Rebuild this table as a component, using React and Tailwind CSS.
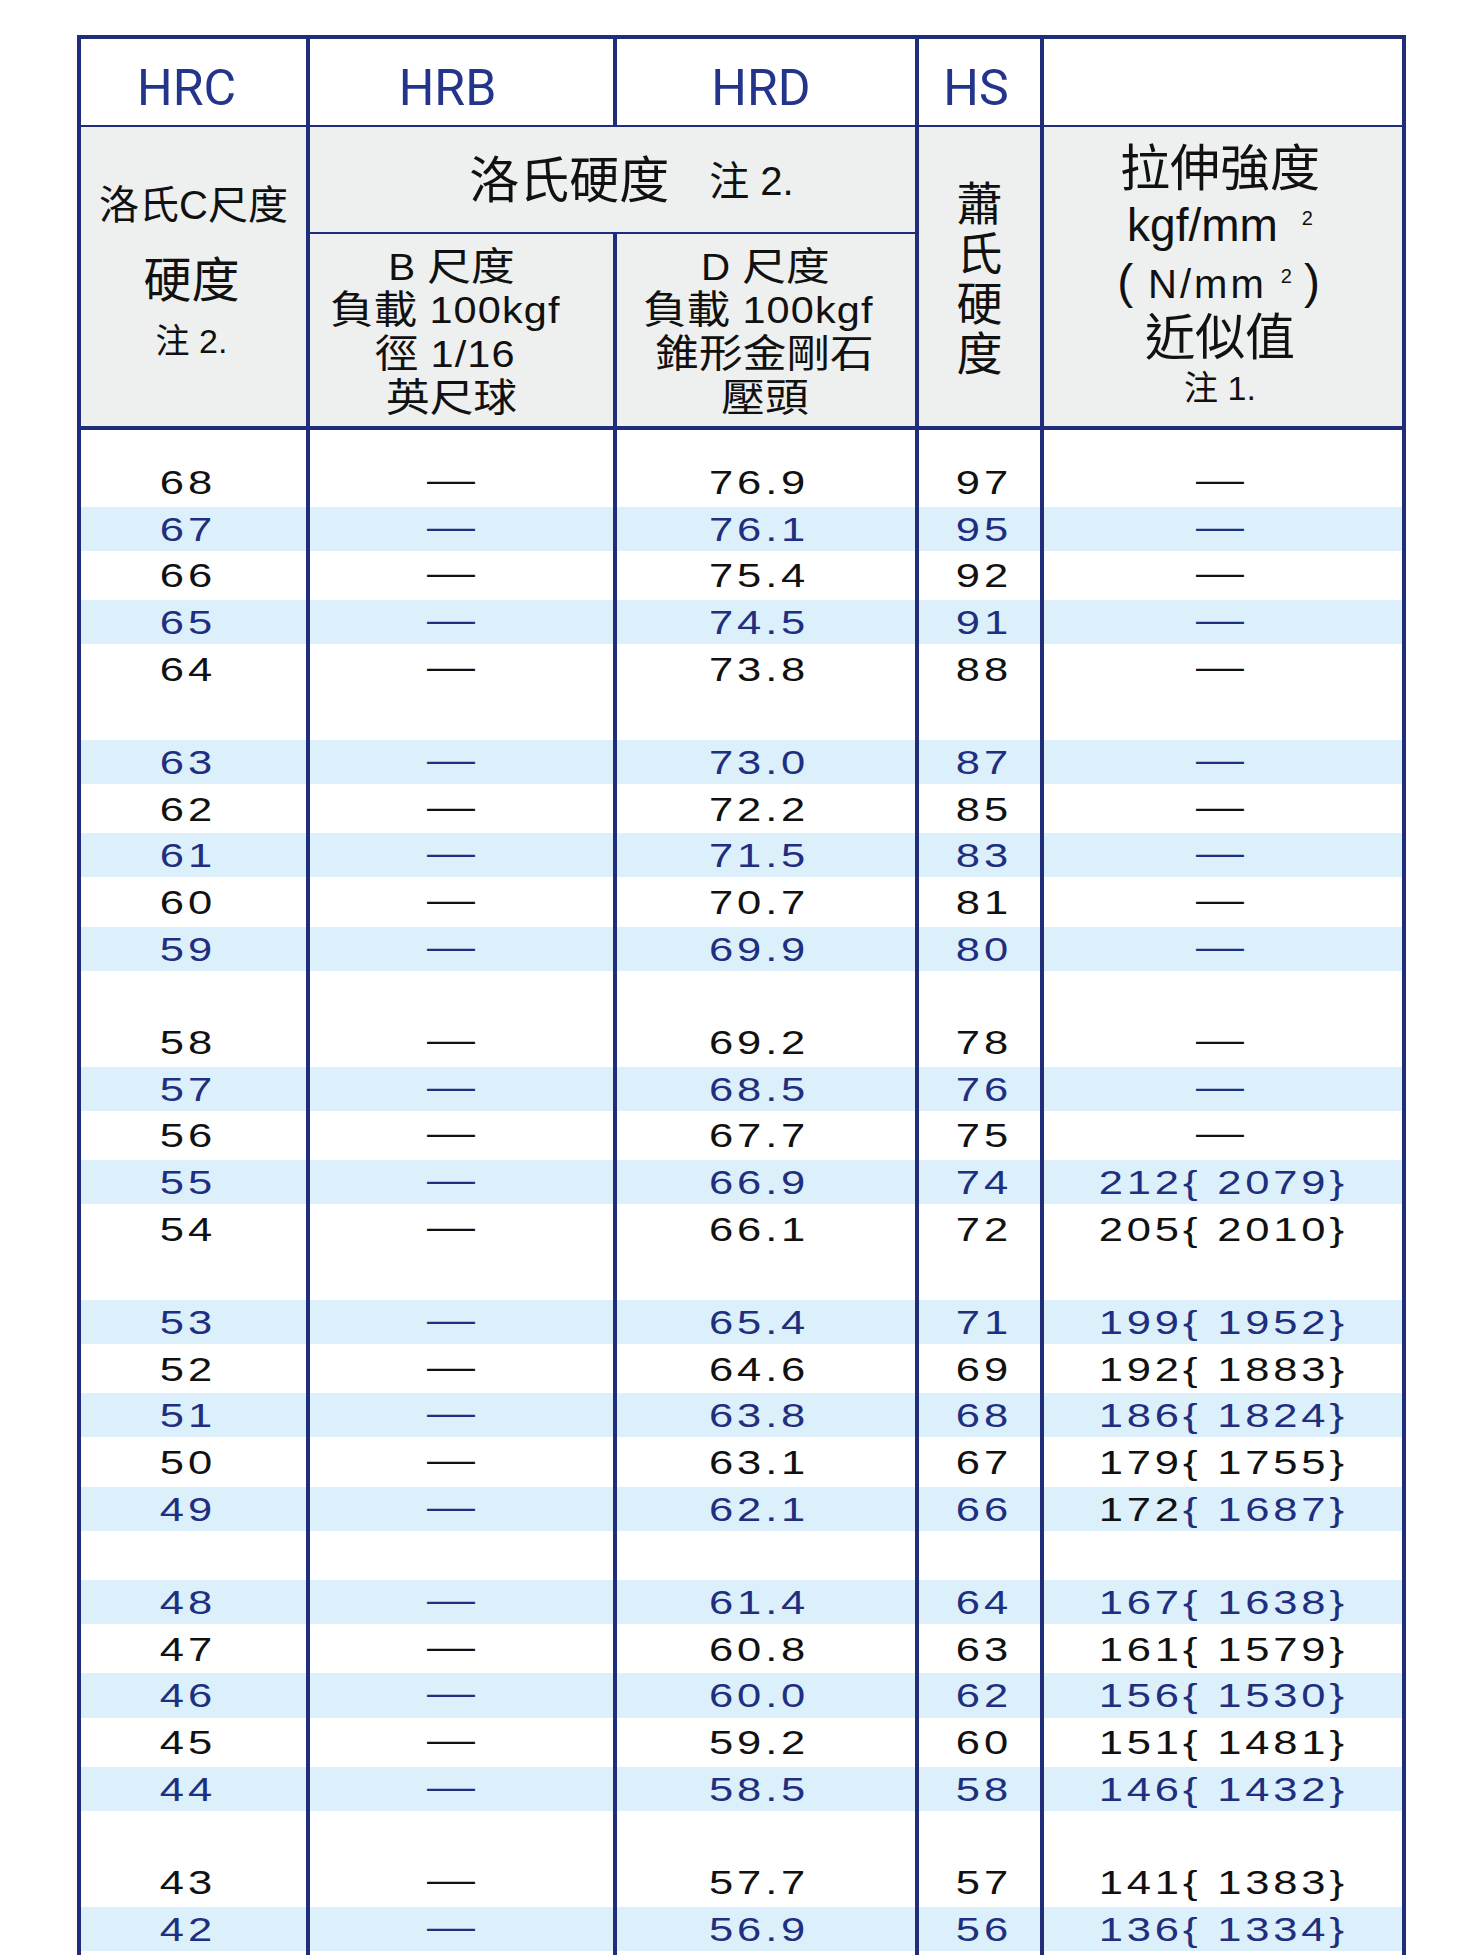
import React from "react";

const GRID =
  "grid grid-cols-[225px_303px_298px_121px_358px] gap-x-[4px] bg-[#1f2d7b]";

const BLUE = new Set([67, 65, 63, 61, 59, 57, 55, 53, 51, 49, 48, 46, 44, 42]);

const DATA = [
  [68, "76.9", 97, null],
  [67, "76.1", 95, null],
  [66, "75.4", 92, null],
  [65, "74.5", 91, null],
  [64, "73.8", 88, null],
  "blank",
  [63, "73.0", 87, null],
  [62, "72.2", 85, null],
  [61, "71.5", 83, null],
  [60, "70.7", 81, null],
  [59, "69.9", 80, null],
  "blank",
  [58, "69.2", 78, null],
  [57, "68.5", 76, null],
  [56, "67.7", 75, null],
  [55, "66.9", 74, "212{ 2079}"],
  [54, "66.1", 72, "205{ 2010}"],
  "blank",
  [53, "65.4", 71, "199{ 1952}"],
  [52, "64.6", 69, "192{ 1883}"],
  [51, "63.8", 68, "186{ 1824}"],
  [50, "63.1", 67, "179{ 1755}"],
  [49, "62.1", 66, "172", "{ 1687}"],
  "blank",
  [48, "61.4", 64, "167{ 1638}"],
  [47, "60.8", 63, "161{ 1579}"],
  [46, "60.0", 62, "156{ 1530}"],
  [45, "59.2", 60, "151{ 1481}"],
  [44, "58.5", 58, "146{ 1432}"],
  "blank",
  [43, "57.7", 57, "141{ 1383}"],
  [42, "56.9", 56, "136{ 1334}"],
  "blank",
];

function Dash() {
  return (
    <span className="inline-block text-[34px] leading-none scale-x-[1.41] -translate-y-[3px]">
      —
    </span>
  );
}

function Cell({ blue, pad, children }) {
  return (
    <div className="bg-white py-[1.34px]">
      <div
        className={
          "h-full flex items-center justify-center " +
          (blue ? "bg-[#dcf0fb] text-[#1f2f80] " : "text-[#111111] ") +
          pad
        }
      >
        {children}
      </div>
    </div>
  );
}

function Num({ children }) {
  return (
    <span className="inline-block whitespace-nowrap text-[34px] leading-none tracking-[3px] scale-x-[1.28]">
      {children}
    </span>
  );
}

function Blank({ h }) {
  return (
    <div className={GRID + " border-x-[4px] border-[#1f2d7b] " + h}>
      <div className="bg-white" />
      <div className="bg-white" />
      <div className="bg-white" />
      <div className="bg-white" />
      <div className="bg-white" />
    </div>
  );
}

function Row({ row }) {
  if (row === "blank") {
    return <Blank h="h-[46.68px]" />;
  }
  const [hrc, hrd, hs, ts, tsRest] = row;
  const blue = BLUE.has(hrc);
  return (
    <div className={GRID + " h-[46.68px] border-x-[4px] border-[#1f2d7b]"}>
      <Cell blue={blue} pad="pr-[11px]">
        <Num>{hrc}</Num>
      </Cell>
      <Cell blue={blue} pad="pr-[21px]">
        <Dash />
      </Cell>
      <Cell blue={blue} pad="pr-[13px]">
        <Num>{hrd}</Num>
      </Cell>
      <Cell blue={blue} pad="pl-[9px]">
        <Num>{hs}</Num>
      </Cell>
      <Cell blue={blue} pad={ts ? "pr-0" : "pr-[6px]"}>
        {ts ? (
          tsRest ? (
            <Num>
              <span className="text-[#111111]">{ts}</span>
              {tsRest}
            </Num>
          ) : (
            <Num>{ts}</Num>
          )
        ) : (
          <Dash />
        )}
      </Cell>
    </div>
  );
}

const LINE =
  "h-[43.6px] leading-[43.6px] text-[39px] scale-x-[1.12] whitespace-nowrap";

export default function App() {
  return (
    <div className="w-[1482px] h-[1955px] overflow-hidden bg-white font-['Liberation_Sans','Noto_Sans_CJK_TC',sans-serif] text-[#111111]">
      <div className="ml-[77px] mt-[35px] w-[1329px]">
        {/* header */}
        <div className="grid grid-cols-[225px_303px_298px_121px_358px] grid-rows-[86px_105px_192px] gap-x-[4px] gap-y-[2px] border-[4px] border-[#1f2d7b] bg-[#1f2d7b]">
          {/* row 1 labels */}
          <div className="bg-white flex items-center justify-center pt-[12px] pr-[14px] font-['Roboto'] text-[50px] leading-none text-[#23358b]">
            HRC
          </div>
          <div className="bg-white flex items-center justify-center pt-[12px] pr-[28px] font-['Roboto'] text-[50px] leading-none text-[#23358b]">
            HRB
          </div>
          <div className="bg-white flex items-center justify-center pt-[12px] pr-[10px] font-['Roboto'] text-[50px] leading-none text-[#23358b]">
            HRD
          </div>
          <div className="bg-white flex items-center justify-center pt-[12px] pr-[7px] font-['Roboto'] text-[50px] leading-none text-[#23358b]">
            HS
          </div>
          <div className="bg-white" />

          {/* col1 rowspan */}
          <div className="row-span-2 bg-[#eef0ef] flex flex-col items-center">
            <div className="mt-[54px] text-[40px] leading-[48px] whitespace-nowrap">洛氏C尺度</div>
            <div className="mt-[24px] pr-[4px] text-[48px] leading-[56px]">硬度</div>
            <div className="mt-[12px] pr-[4px] text-[34px] leading-[40px] whitespace-nowrap">注 2.</div>
          </div>

          {/* 洛氏硬度 colspan */}
          <div className="col-span-2 bg-[#eef0ef] flex items-center justify-center pl-[38px] pt-[2px] whitespace-nowrap">
            <span className="text-[50px] leading-none">洛氏硬度</span>
            <span className="ml-[40px] text-[40px] leading-none">注 2.</span>
          </div>

          {/* HS vertical */}
          <div className="row-span-2 bg-[#eef0ef] flex flex-col items-center justify-center pt-[4px] text-[46px] leading-[50px]">
            <div>蕭</div>
            <div>氏</div>
            <div>硬</div>
            <div>度</div>
          </div>

          {/* tensile strength */}
          <div className="row-span-2 bg-[#eef0ef] flex flex-col items-center pt-[16px] pr-[6px]">
            <div className="text-[50px] leading-[52px]">拉伸強度</div>
            <div className="text-[46px] leading-[61.6px] whitespace-nowrap">
              kgf/mm
              <span className="ml-[24px] text-[20px] leading-none align-super">2</span>
            </div>
            <div className="text-[40px] leading-[55.6px] whitespace-nowrap tracking-[3px]">
              <span className="text-[48px] leading-none mr-[12px]">(</span>
              N/mm
              <span className="ml-[14px] mr-[12px] text-[20px] leading-none align-super tracking-normal">2</span>
              <span className="text-[48px] leading-none">)</span>
            </div>
            <div className="text-[50px] leading-[53.8px]">近似值</div>
            <div className="text-[34px] leading-[45.2px] whitespace-nowrap">注 1.</div>
          </div>

          {/* B scale */}
          <div className="bg-[#eef0ef] flex flex-col items-center justify-center pt-[4px] pr-[20px]">
            <div className={LINE}>
              <span className="text-[36px] leading-none">B</span> 尺度
            </div>
            <div className={LINE + " pr-[12px]"}>
              負載 <span className="text-[37px] leading-none tracking-[1px]">100kgf</span>
            </div>
            <div className={LINE + " pr-[12px]"}>
              徑 <span className="text-[37px] leading-none tracking-[1px]">1/16</span>
            </div>
            <div className={LINE}>英尺球</div>
          </div>

          {/* D scale */}
          <div className="bg-[#eef0ef] flex flex-col items-center justify-center pt-[4px] pr-[2px]">
            <div className={LINE}>
              <span className="text-[36px] leading-none">D</span> 尺度
            </div>
            <div className={LINE + " pr-[12px]"}>
              負載 <span className="text-[37px] leading-none tracking-[1px]">100kgf</span>
            </div>
            <div className={LINE}>錐形金剛石</div>
            <div className={LINE}>壓頭</div>
          </div>
        </div>

        {/* body */}
        <Blank h="h-[28.7px]" />
        {DATA.map((row, i) => (
          <Row key={i} row={row} />
        ))}
      </div>
    </div>
  );
}
